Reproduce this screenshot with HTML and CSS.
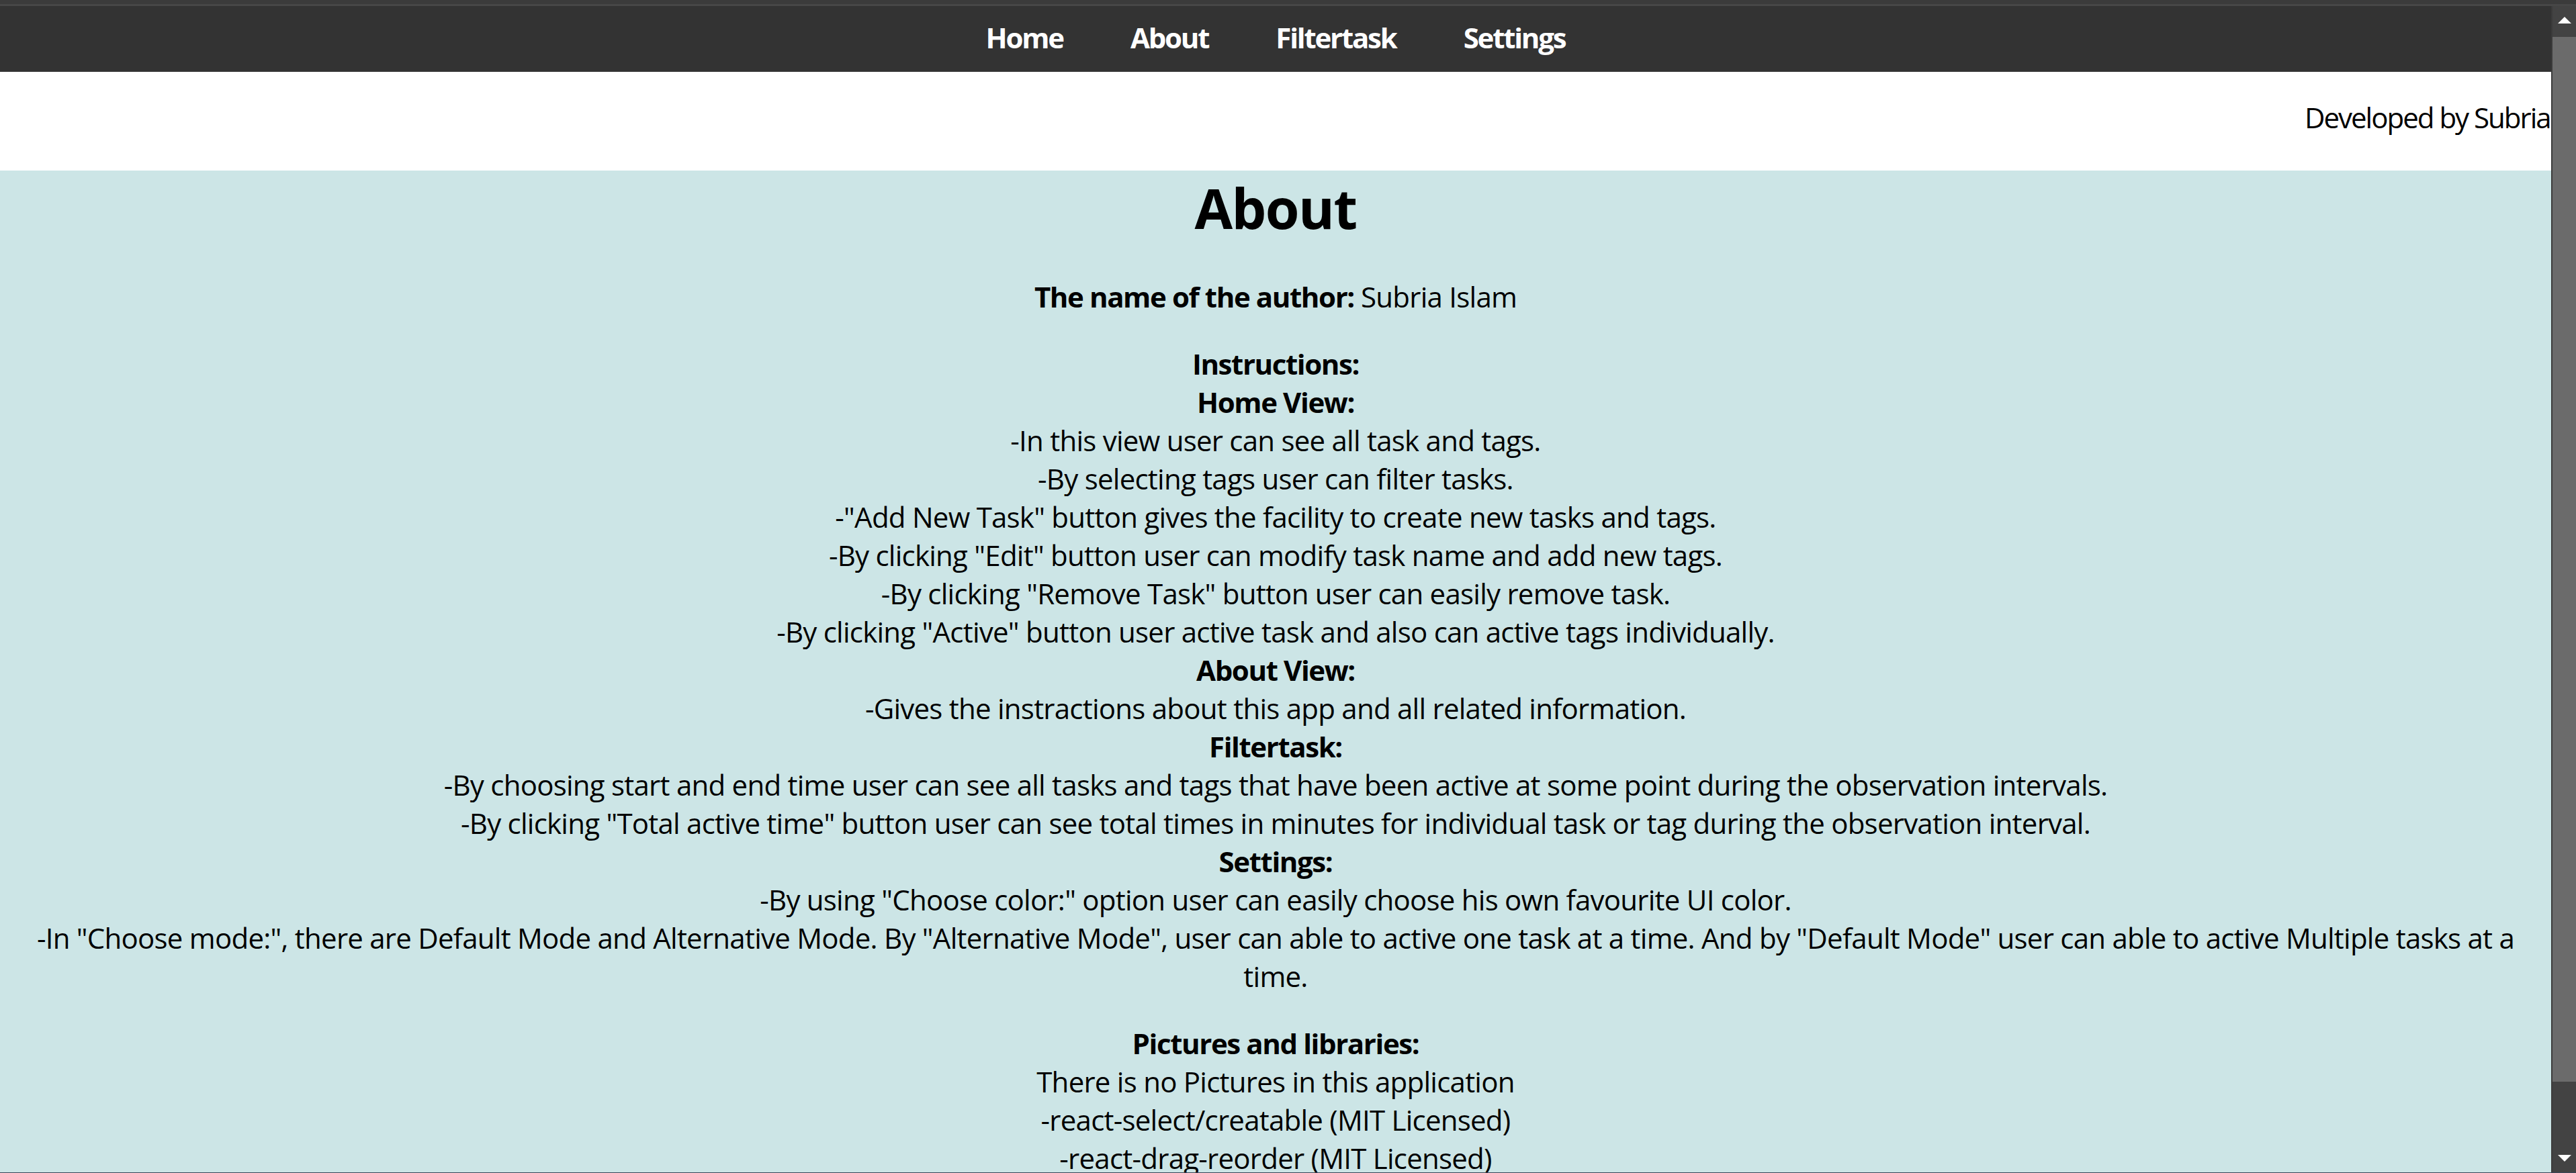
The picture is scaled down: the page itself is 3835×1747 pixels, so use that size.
FILE: index.html
```html
<!DOCTYPE html>
<html lang="en">
<head>
<meta charset="utf-8">
<title>About</title>
<link rel="stylesheet" href="styles.css">
</head>
<body>
<div class="chrome"></div>
<div class="window">
  <div class="viewport">
    <nav class="nav">
      <a class="nav-link" href="#">Home</a>
      <a class="nav-link" href="#">About</a>
      <a class="nav-link" href="#">Filtertask</a>
      <a class="nav-link" href="#">Settings</a>
    </nav>
    <header class="credit">
      <span class="credit-text">Developed by Subria Islam</span>
    </header>
    <main class="about">
      <h1 class="about-title">About</h1>
      <p class="about-block"><b>The name of the author:</b> Subria Islam</p>
      <p class="about-block">
        <b>Instructions:</b><br>
        <b>Home View:</b><br>
        -In this view user can see all task and tags.<br>
        -By selecting tags user can filter tasks.<br>
        -"Add New Task" button gives the facility to create new tasks and tags.<br>
        -By clicking "Edit" button user can modify task name and add new tags.<br>
        -By clicking "Remove Task" button user can easily remove task.<br>
        -By clicking "Active" button user active task and also can active tags individually.<br>
        <b>About View:</b><br>
        -Gives the instractions about this app and all related information.<br>
        <b>Filtertask:</b><br>
        -By choosing start and end time user can see all tasks and tags that have been active at some point during the observation intervals.<br>
        -By clicking "Total active time" button user can see total times in minutes for individual task or tag during the observation interval.<br>
        <b>Settings:</b><br>
        -By using "Choose color:" option user can easily choose his own favourite UI color.<br>
        -In "Choose mode:", there are Default Mode and Alternative Mode. By "Alternative Mode", user can able to active one task at a time. And by "Default Mode" user can able to active Multiple tasks at a time.
      </p>
      <p class="about-block">
        <b>Pictures and libraries:</b><br>
        There is no Pictures in this application<br>
        -react-select/creatable (MIT Licensed)<br>
        -react-drag-reorder (MIT Licensed)
      </p>
    </main>
  </div>
  <div class="scrollbar">
    <div class="sb-button sb-up">
      <svg class="sb-arrow" viewBox="0 0 20 10" width="20" height="10"><polygon points="10,0 20,10 0,10" fill="#ffffff"/></svg>
    </div>
    <div class="sb-thumb"></div>
    <div class="sb-track"></div>
    <div class="sb-button sb-down">
      <svg class="sb-arrow" viewBox="0 0 20 10" width="20" height="10"><polygon points="0,0 20,0 10,10" fill="#ffffff"/></svg>
    </div>
  </div>
</div>
</body>
</html>
```

FILE: styles.css
```css
html, body {
  margin: 0;
  padding: 0;
  height: 100%;
  overflow: hidden;
}

body {
  display: flex;
  flex-direction: column;
  background: #3c3c3c;
  font-family: "Open Sans", "Noto Sans", sans-serif;
  font-size: 42px;
  line-height: 57px;
  letter-spacing: -0.75px;
  color: #000000;
}

.chrome {
  flex: 0 0 6px;
  background: #3b3b3b;
  border-bottom: 3px solid #474747;
}

.window {
  flex: 1 1 auto;
  min-height: 0;
  display: flex;
  border-bottom: 1px solid #3a4658;
}

.viewport {
  flex: 1 1 auto;
  min-width: 0;
  display: flex;
  flex-direction: column;
  overflow: hidden;
  background: #ffffff;
}

/* top navigation */
.nav {
  flex: 0 0 auto;
  height: 98px;
  box-sizing: border-box;
  padding-top: 18px;
  background: #333333;
  display: flex;
  justify-content: center;
  gap: 100px;
}

.nav-link {
  color: #ffffff;
  font-weight: 700;
  letter-spacing: -2.2px;
  text-decoration: none;
}

/* credit strip */
.credit {
  flex: 0 0 auto;
  height: 147px;
  box-sizing: border-box;
  padding: 39px 0 0 3431px;
  white-space: nowrap;
  background: #ffffff;
}

.credit-text {
  letter-spacing: -2px;
}

/* about content */
.about {
  flex: 1 0 auto;
  background: #cce5e6;
  text-align: center;
  padding: 0 40px;
}

.about-title {
  margin: 0 0 49px;
  font-size: 82px;
  line-height: 110px;
  font-weight: 700;
  letter-spacing: -1.5px;
}

.about-block {
  margin: 43px 0;
}

.about-block b {
  font-weight: 700;
  letter-spacing: -1.4px;
}

/* fake scrollbar */
.scrollbar {
  flex: 0 0 37px;
  display: flex;
  flex-direction: column;
  background: #434343;
  border-left: 2px solid #3b3b3b;
  box-sizing: border-box;
}

.sb-button {
  flex: 0 0 46px;
  display: flex;
  align-items: center;
  justify-content: center;
}

.sb-up {
  padding-bottom: 4px;
  box-sizing: border-box;
}

.sb-thumb {
  flex: 0 0 1556px;
  background: #6b6b6b;
}

.sb-track {
  flex: 1 1 auto;
}

.sb-down {
  align-items: flex-start;
  padding-top: 20px;
  box-sizing: border-box;
}

.sb-arrow {
  display: block;
}
```
